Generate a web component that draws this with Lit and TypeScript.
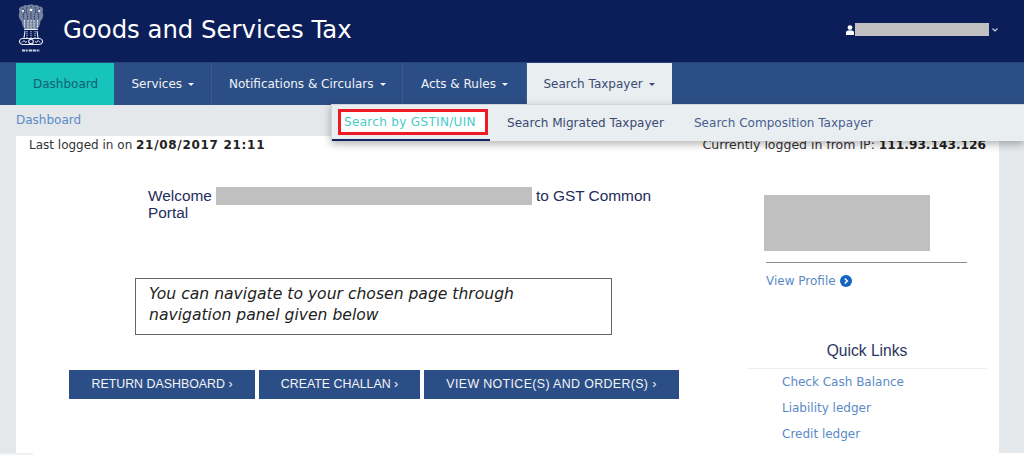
import { LitElement, html, css } from "lit";
import { customElement } from "lit/decorators.js";

const caret = html`<span class="caret"></span>`;

@customElement("app-root")
export class AppRoot extends LitElement {
  static styles = css`
    :host { display: block; width: 1024px; height: 455px; overflow: hidden; position: relative; background: #e4e8eb; font-family: "DejaVu Sans", Verdana, sans-serif; }
    * { box-sizing: border-box; }
    .header { height: 62px; background: #0b1e59; display: flex; align-items: center; padding: 0 24px 0 16px; color: #fff; }
    .logo { width: 30px; height: 50px; display: block; margin-top: -4px; }
    .title { font-size: 24.35px; margin-left: 17px; line-height: 62px; flex: 1; white-space: nowrap; margin-top: -3px; }
    .user { display: flex; align-items: center; margin-top: -3px; }
    .user svg { display: block; }
    .redact-user { width: 134px; height: 13px; background: #c0c0c0; margin-left: 1px; }
    .nav { height: 43px; background: #2c4e86; border-top: 1px solid #26447a; padding-left: 16px; display: flex; font-size: 12px; }
    .nav a { display: flex; align-items: center; height: 42px; padding: 0 0 0 17.5px; color: #f0f3f7; border-right: 1px solid #3b5b90; white-space: nowrap; }
    .nav a.active { width: 98px; background: #17c4bb; color: #0e5f73; border-right: 0; padding: 0 0 0 17px; }
    .nav a.n1 { width: 97.5px; } .nav a.n2 { width: 191.5px; } .nav a.n3 { width: 124px; padding-left: 18px; }
    .nav a.open { width: 145px; background: #e9eef1; color: #3a4a72; border-right: 0; padding: 0 0 1px 16.5px; height: 43px; }
    .caret { display: inline-block; width: 0; height: 0; margin-left: 6px; border-left: 3.5px solid transparent; border-right: 3.5px solid transparent; border-top: 3.5px solid currentColor; }
    .crumb { height: 31px; padding: 8px 0 0 16px; font-size: 12px; line-height: 15px; color: #5a8ac6; }
    .panel { margin: 0 25px 0 16px; height: 317px; background: #fff; position: relative; overflow: hidden; }
    .foot { height: 2px; background: #fff; }
    .foot div { width: 33px; height: 2px; background: #eef0f2; }
    .login { display: flex; justify-content: space-between; padding: 1px 13px 0 13px; font-size: 12px; line-height: 16px; color: #333; height: 18px; }
    .login b { font-weight: 700; color: #222; letter-spacing: .7px; }
    .login .ip { font-size: 12.5px; }
    .login .ip b { letter-spacing: 0; font-size: 12.2px; }
    .cols { display: flex; }
    .left { width: 731px; padding-top: 33px; }
    .welcome { padding-left: 132px; font: 15.4px/16.5px "Liberation Sans", Arial, sans-serif; color: #1f2d5c; }
    .w-first { display: flex; align-items: center; white-space: nowrap; }
    .redact-name { display: inline-block; width: 316px; height: 18px; background: #c0c0c0; margin: 0 4px 0 4px; }
    .notice { width: 477px; height: 57px; margin: 56px 0 0 119px; border: 1px solid #666; padding: 5px 13px; font-size: 15.6px; font-style: italic; line-height: 21px; color: #222; white-space: nowrap; }
    .buttons { display: flex; gap: 4px; margin: 35px 0 0 53px; }
    .btn { height: 29px; display: flex; align-items: center; justify-content: center; background: #2c4e86; color: #f2f4f8; font: 12.4px "Liberation Sans", Arial, sans-serif; white-space: nowrap; }
    .b1 { width: 186px; } .b2 { width: 161px; } .b3 { width: 255px; letter-spacing: .37px; }
    .right { width: 252px; font-size: 12px; color: #5a8ac6; }
    .photo { width: 166px; height: 56px; background: #c0c0c0; margin: 41px 0 0 17px; }
    .rule { width: 201px; height: 1px; background: #8f8f8f; margin: 11px 0 0 19px; }
    .profile { display: flex; align-items: center; gap: 4px; margin: 10px 0 0 19px; height: 16px; color: #5a8ac6; }
    .profile svg { display: block; }
    .ql { margin: 52px 0 0 0; width: 240px; text-align: center; font: 15.6px/20px "Liberation Sans", Arial, sans-serif; color: #2b3560; height: 28px; border-bottom: 1px solid #eeeeee; }
    .links { padding: 5px 0 0 35px; display: flex; flex-direction: column; gap: 10px; line-height: 16px; }
    .drop { position: absolute; left: 331px; top: 104px; width: 693px; height: 37px; background: #e9eef1; box-shadow: 0 3px 8px rgba(0,0,0,.3); border-top: 1px solid #cfd5da; border-left: 1px solid #cfd5da; display: flex; font-size: 12.05px; color: #3a4a72; }
    .tab { height: 35px; display: flex; align-items: center; white-space: nowrap; }
    .tab1 { width: 158px; padding-left: 6px; border-bottom: 2px solid #14235f; height: 36px; }
    .hl { width: 150px; height: 26px; border: 3px solid #ed1c24; display: flex; align-items: center; padding-left: 3px; background: #fff; color: #45ccc8; letter-spacing: .3px; }
    .tab2 { margin-left: 17px; }
    .tab3 { margin-left: 30px; color: #4a5f8f; }
  `;

  render() {
    return html`
      <div class="header">
        <svg class="logo" viewBox="0 0 30 50" fill="none" stroke="#e6eaf2" stroke-width=".9">
          <path d="M3.500 8C2 5 4 2 7 2.500 8 1 10 .5 11 1.500 13 0 17 0 19 1.500 20 .5 22 1 23 2.500 26 2 28 5 26.500 8 28 11 27 15 24.500 17 24 21 23 23 21.500 25H8.500C7 23 6 21 5.500 17 3 15 2 11 3.500 8z" fill="#76839f" stroke="none" />
          <path d="M6 4c2 1 3 3 2 5s-1 4 0 6M11 3c-1 3-1 5 0 7s1 4 0 6M15 2v13M19 3c1 3 1 5 0 7s-1 4 0 6M24 4c-2 1-3 3-2 5s1 4 0 6" stroke="#0b1e59" stroke-width=".8" stroke-dasharray="1.500 .8"/>
          <circle cx="7" cy="7" r="1" fill="#fff" stroke="none"/><circle cx="15" cy="6" r="1.300" fill="#fff" stroke="none"/><circle cx="23" cy="7" r="1" fill="#fff" stroke="none"/>
          <path d="M8.500 16v8M12 16v9M15 16v9M18 16v9M21.500 16v8" stroke-dasharray="2 .7"/>
          <path d="M8 25.500h14M9 27l-1 7M21 27l1 7" stroke-width="1.100"/>
          <path d="M11 27v7M15 27v7M19 27v7" stroke="#9aa6c0" stroke-width="1.300" stroke-dasharray="1.200 .8"/>
          <path d="M7 34.500h16c2 0 3.500 1.500 3.500 3s-1.500 3-3.500 3H7c-2 0-3.500-1.500-3.500-3s1.500-3 3.500-3z" stroke-width="1.200"/>
          <circle cx="15" cy="37.500" r="2.300" stroke-width="1.100"/>
          <path d="M6 38.500l2-2 1.500 2 1.500-1M24 38.500l-2-2-1.500 2-1.500-1" stroke-width="1"/>
          <path d="M6 46.500h18" stroke-width="2.200" stroke-dasharray="3 .7 2 1 3.500 .7" stroke="#cbd2e0"/>
        </svg>
        <div class="title">Goods and Services Tax</div>
        <div class="user">
          <svg width="8" height="10" viewBox="0 0 8 10" fill="#fff"><circle cx="4" cy="2.600" r="2.400"/><path d="M0 10V7.500C0 6 1.500 5.200 4 5.200S8 6 8 7.500V10z"/></svg>
          <div class="redact-user"></div>
          <svg width="10" height="10" viewBox="0 0 10 10" fill="none" stroke="#cdd3e2" stroke-width="1.100" style="margin-left:1px"><path d="M2.500 3.500 5 6l2.500-2.500"/></svg>
        </div>
      </div>
      <div class="nav">
        <a class="active">Dashboard</a>
        <a class="n1">Services${caret}</a>
        <a class="n2">Notifications &amp; Circulars${caret}</a>
        <a class="n3">Acts &amp; Rules${caret}</a>
        <a class="open">Search Taxpayer${caret}</a>
      </div>
      <div class="crumb">Dashboard</div>
      <div class="panel">
        <div class="login">
          <span>Last logged in on <b>21/08/2017 21:11</b></span>
          <span class="ip">Currently logged in from IP: <b>111.93.143.126</b></span>
        </div>
        <div class="cols">
          <div class="left">
            <div class="welcome">
              <div class="w-first">Welcome<span class="redact-name"></span>to GST Common</div>
              <div>Portal</div>
            </div>
            <div class="notice">You can navigate to your chosen page through<br />navigation panel given below</div>
            <div class="buttons">
              <div class="btn b1">RETURN DASHBOARD ›</div>
              <div class="btn b2">CREATE CHALLAN ›</div>
              <div class="btn b3">VIEW NOTICE(S) AND ORDER(S) ›</div>
            </div>
          </div>
          <div class="right">
            <div class="photo"></div>
            <div class="rule"></div>
            <div class="profile">View Profile
              <svg width="12" height="12" viewBox="0 0 12 12"><circle cx="6" cy="6" r="6" fill="#1565c0"/><path d="M4.800 3.400 7.300 6l-2.500 2.600" fill="none" stroke="#fff" stroke-width="1.500"/></svg>
            </div>
            <div class="ql">Quick Links</div>
            <div class="links"><span>Check Cash Balance</span><span>Liability ledger</span><span>Credit ledger</span></div>
          </div>
        </div>
      </div>
      <div class="foot"><div></div></div>
      <div class="drop">
        <div class="tab tab1"><div class="hl">Search by GSTIN/UIN</div></div>
        <div class="tab tab2">Search Migrated Taxpayer</div>
        <div class="tab tab3">Search Composition Taxpayer</div>
      </div>
    `;
  }
}
